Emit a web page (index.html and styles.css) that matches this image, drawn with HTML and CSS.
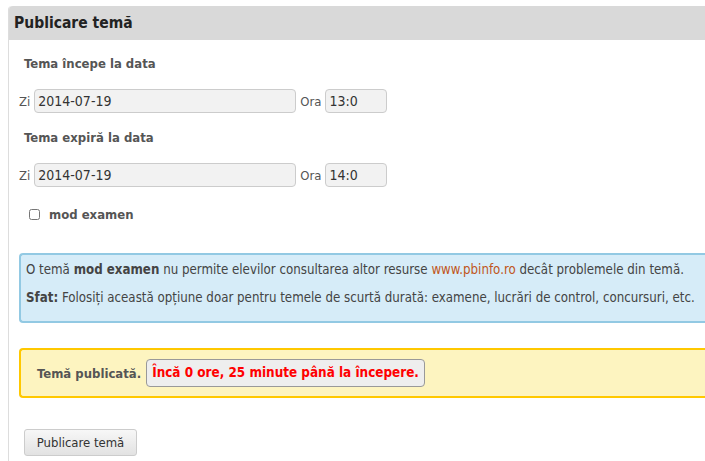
FILE: index.html
```html
<!DOCTYPE html>
<html lang="ro">
<head>
    <meta charset="UTF-8">
    <meta name="viewport" content="width=device-width, initial-scale=1.0">
    <title>Publicare temă</title>
    <link rel="stylesheet" href="styles.css">
</head>
<body>
    <div class="panel">
        <div class="panel-head">Publicare temă</div>
        <div class="panel-body">
            <div class="field-label">Tema începe la data</div>
            <div class="date-row">
                <span>Zi</span>
                <input type="text" class="in-date" value="2014-07-19">
                <span>Ora</span>
                <input type="text" class="in-time" value="13:0">
            </div>

            <div class="field-label">Tema expiră la data</div>
            <div class="date-row">
                <span>Zi</span>
                <input type="text" class="in-date" value="2014-07-19">
                <span>Ora</span>
                <input type="text" class="in-time" value="14:0">
            </div>

            <label class="check-row">
                <input type="checkbox">
                <span>mod examen</span>
            </label>

            <div class="info-box">
                <p>O temă <b>mod examen</b> nu permite elevilor consultarea altor resurse <a href="#">www.pbinfo.ro</a> decât problemele din temă.</p>
                <p><b>Sfat:</b> Folosiți această opțiune doar pentru temele de scurtă durată: examene, lucrări de control, concursuri, etc.</p>
            </div>

            <div class="warn-box">
                <b>Temă publicată.</b>
                <span class="badge">Încă 0 ore, 25 minute până la începere.</span>
            </div>

            <button class="btn">Publicare temă</button>
        </div>
    </div>
</body>
</html>
```

FILE: styles.css
```css
body {
    margin: 6px 0 0 8px;
    font-family: "DejaVu Sans Condensed", "DejaVu Sans", sans-serif;
    font-stretch: condensed;
    color: #444;
    background: #fff;
    overflow: hidden;
}
.panel {
    border-left: 1px solid #ddd;
    border-top-left-radius: 4px;
    width: 720px;
    height: 470px;
}
.panel-head {
    background: #d9d9d9;
    border-top-left-radius: 4px;
    height: 34px;
    line-height: 34px;
    padding-left: 5px;
    font-size: 15.5px;
    font-weight: bold;
    color: #222;
}
.panel-body {
    padding: 0 0 0 10px;
}
.field-label {
    font-size: 13px;
    font-weight: bold;
    color: #555;
    padding: 17px 0 0 5px;
    height: 32px;
    line-height: 14px;
}
.date-row {
    display: flex;
    align-items: center;
    gap: 4px;
    height: 24px;
    margin-bottom: 1px;
    font-size: 13px;
    color: #555;
}
.date-row input {
    height: 24px;
    box-sizing: border-box;
    border: 1px solid #ccc;
    border-radius: 4px;
    background: #f2f2f2;
    font-family: inherit;
    font-size: 14px;
    color: #333;
    padding: 0 3px;
    margin: 0;
}
.in-date {
    width: 262px;
}
.in-time {
    width: 62px;
}
.check-row {
    display: flex;
    align-items: center;
    gap: 9px;
    margin: 20px 0 0 8px;
    height: 15px;
    font-size: 13px;
    font-weight: bold;
    color: #555;
}
.check-row input {
    margin: 0 0 0 2px;
    width: 11px;
    height: 11px;
}
.info-box {
    margin-top: 31px;
    background: #d6ecf8;
    border: 2px solid #92c9e3;
    border-right: none;
    border-radius: 4px 0 0 4px;
    padding: 7px 0 8px 5px;
    height: 51px;
    font-size: 13.2px;
    color: #444;
}
.info-box p {
    margin: 0 0 12px;
    line-height: 16px;
}
.info-box a {
    color: #c0561b;
    text-decoration: none;
}
.warn-box {
    margin-top: 25px;
    background: #fdf4c0;
    border: 2px solid #ffc800;
    border-right: none;
    border-radius: 4px 0 0 4px;
    height: 46px;
    display: flex;
    align-items: center;
    gap: 5px;
    padding-left: 16px;
    font-size: 13px;
    color: #555;
}
.badge {
    background: #eee;
    border: 1px solid #999;
    border-radius: 4px;
    padding: 0 5px;
    height: 26px;
    line-height: 26px;
    font-size: 13.4px;
    color: #f00;
    font-weight: bold;
}
.btn {
    margin: 31px 0 0 5px;
    width: 113px;
    height: 27px;
    border: 1px solid #ccc;
    border-radius: 3px;
    background: linear-gradient(to bottom, #f7f7f7, #e2e2e2);
    font-family: inherit;
    font-size: 13px;
    color: #333;
    padding: 0;
}
```
